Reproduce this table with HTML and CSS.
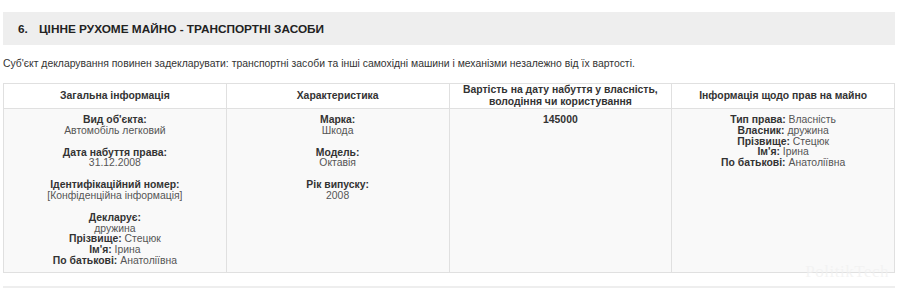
FILE: index.html
```html
<!DOCTYPE html>
<html lang="uk">
<head>
<meta charset="utf-8">
<title>Декларація</title>
<link rel="stylesheet" href="styles.css">
</head>
<body>
<div class="page">
  <div class="section-title"><span class="num">6.</span>ЦІННЕ РУХОМЕ МАЙНО - ТРАНСПОРТНІ ЗАСОБИ</div>
  <p class="lead">Суб'єкт декларування повинен задекларувати: транспортні засоби та інші самохідні машини і механізми незалежно від їх вартості.</p>
  <table class="grid">
    <thead>
      <tr>
        <th>Загальна інформація</th>
        <th>Характеристика</th>
        <th>Вартість на дату набуття у власність, володіння чи користування</th>
        <th>Інформація щодо прав на майно</th>
      </tr>
    </thead>
    <tbody>
      <tr>
        <td>
          <div class="blk"><b>Вид об'єкта:</b><br>Автомобіль легковий</div>
          <div class="blk"><b>Дата набуття права:</b><br>31.12.2008</div>
          <div class="blk"><b>Ідентифікаційний номер:</b><br>[Конфіденційна інформація]</div>
          <div class="blk"><b>Декларує:</b><br>дружина<br><b>Прізвище:</b> Стецюк<br><b>Ім'я:</b> Ірина<br><b>По батькові:</b> Анатоліївна</div>
        </td>
        <td>
          <div class="blk"><b>Марка:</b><br>Шкода</div>
          <div class="blk"><b>Модель:</b><br>Октавія</div>
          <div class="blk"><b>Рік випуску:</b><br>2008</div>
        </td>
        <td>
          <div class="blk"><b>145000</b></div>
        </td>
        <td>
          <div class="blk"><b>Тип права:</b> Власність<br><b>Власник:</b> дружина<br><b>Прізвище:</b> Стецюк<br><b>Ім'я:</b> Ірина<br><b>По батькові:</b> Анатоліївна</div>
        </td>
      </tr>
    </tbody>
  </table>
  <div class="section-title next"></div>
  <div class="watermark">PolitikTech</div>
</div>
</body>
</html>
```

FILE: styles.css
```css
html, body {
  margin: 0;
  padding: 0;
  background: #fff;
}
body {
  font-family: "Liberation Sans", Arial, sans-serif;
  color: #333;
}
.page {
  position: relative;
  width: 892px;
  margin-left: 3px;
  padding-top: 12px;
}
.section-title {
  background: #eeeeee;
  height: 33px;
  line-height: 35px;
  padding-left: 15px;
  font-size: 11.8px;
  font-weight: bold;
  color: #222;
  box-sizing: border-box;
}
.section-title .num {
  display: inline-block;
  width: 21px;
}
.section-title.next {
  margin-top: 13px;
  height: 20px;
}
.lead {
  margin: 12px 0 12px;
  font-size: 10.4px;
  line-height: 14px;
  color: #333;
}
.grid {
  width: 100%;
  border-collapse: collapse;
  table-layout: fixed;
  font-size: 10.4px;
}
.grid th {
  width: 25%;
  background: #fff;
  border: 1px solid #e0e0e0;
  font-weight: bold;
  color: #333;
  line-height: 12px;
  padding: 0 8px;
  height: 24px;
  vertical-align: middle;
  text-align: center;
}
.grid td {
  background: #f9f9f9;
  border: 1px solid #e0e0e0;
  vertical-align: top;
  text-align: center;
  padding: 6px 8px 5px;
  line-height: 10.8px;
  color: #555;
  height: 152px;
}
.grid td b {
  color: #333;
}
.blk + .blk {
  margin-top: 11px;
}
.watermark {
  position: absolute;
  right: 6px;
  top: 262px;
  font-family: "Liberation Serif", serif;
  font-size: 17px;
  color: rgba(240, 240, 240, 0.7);
  letter-spacing: 0.5px;
}
```
